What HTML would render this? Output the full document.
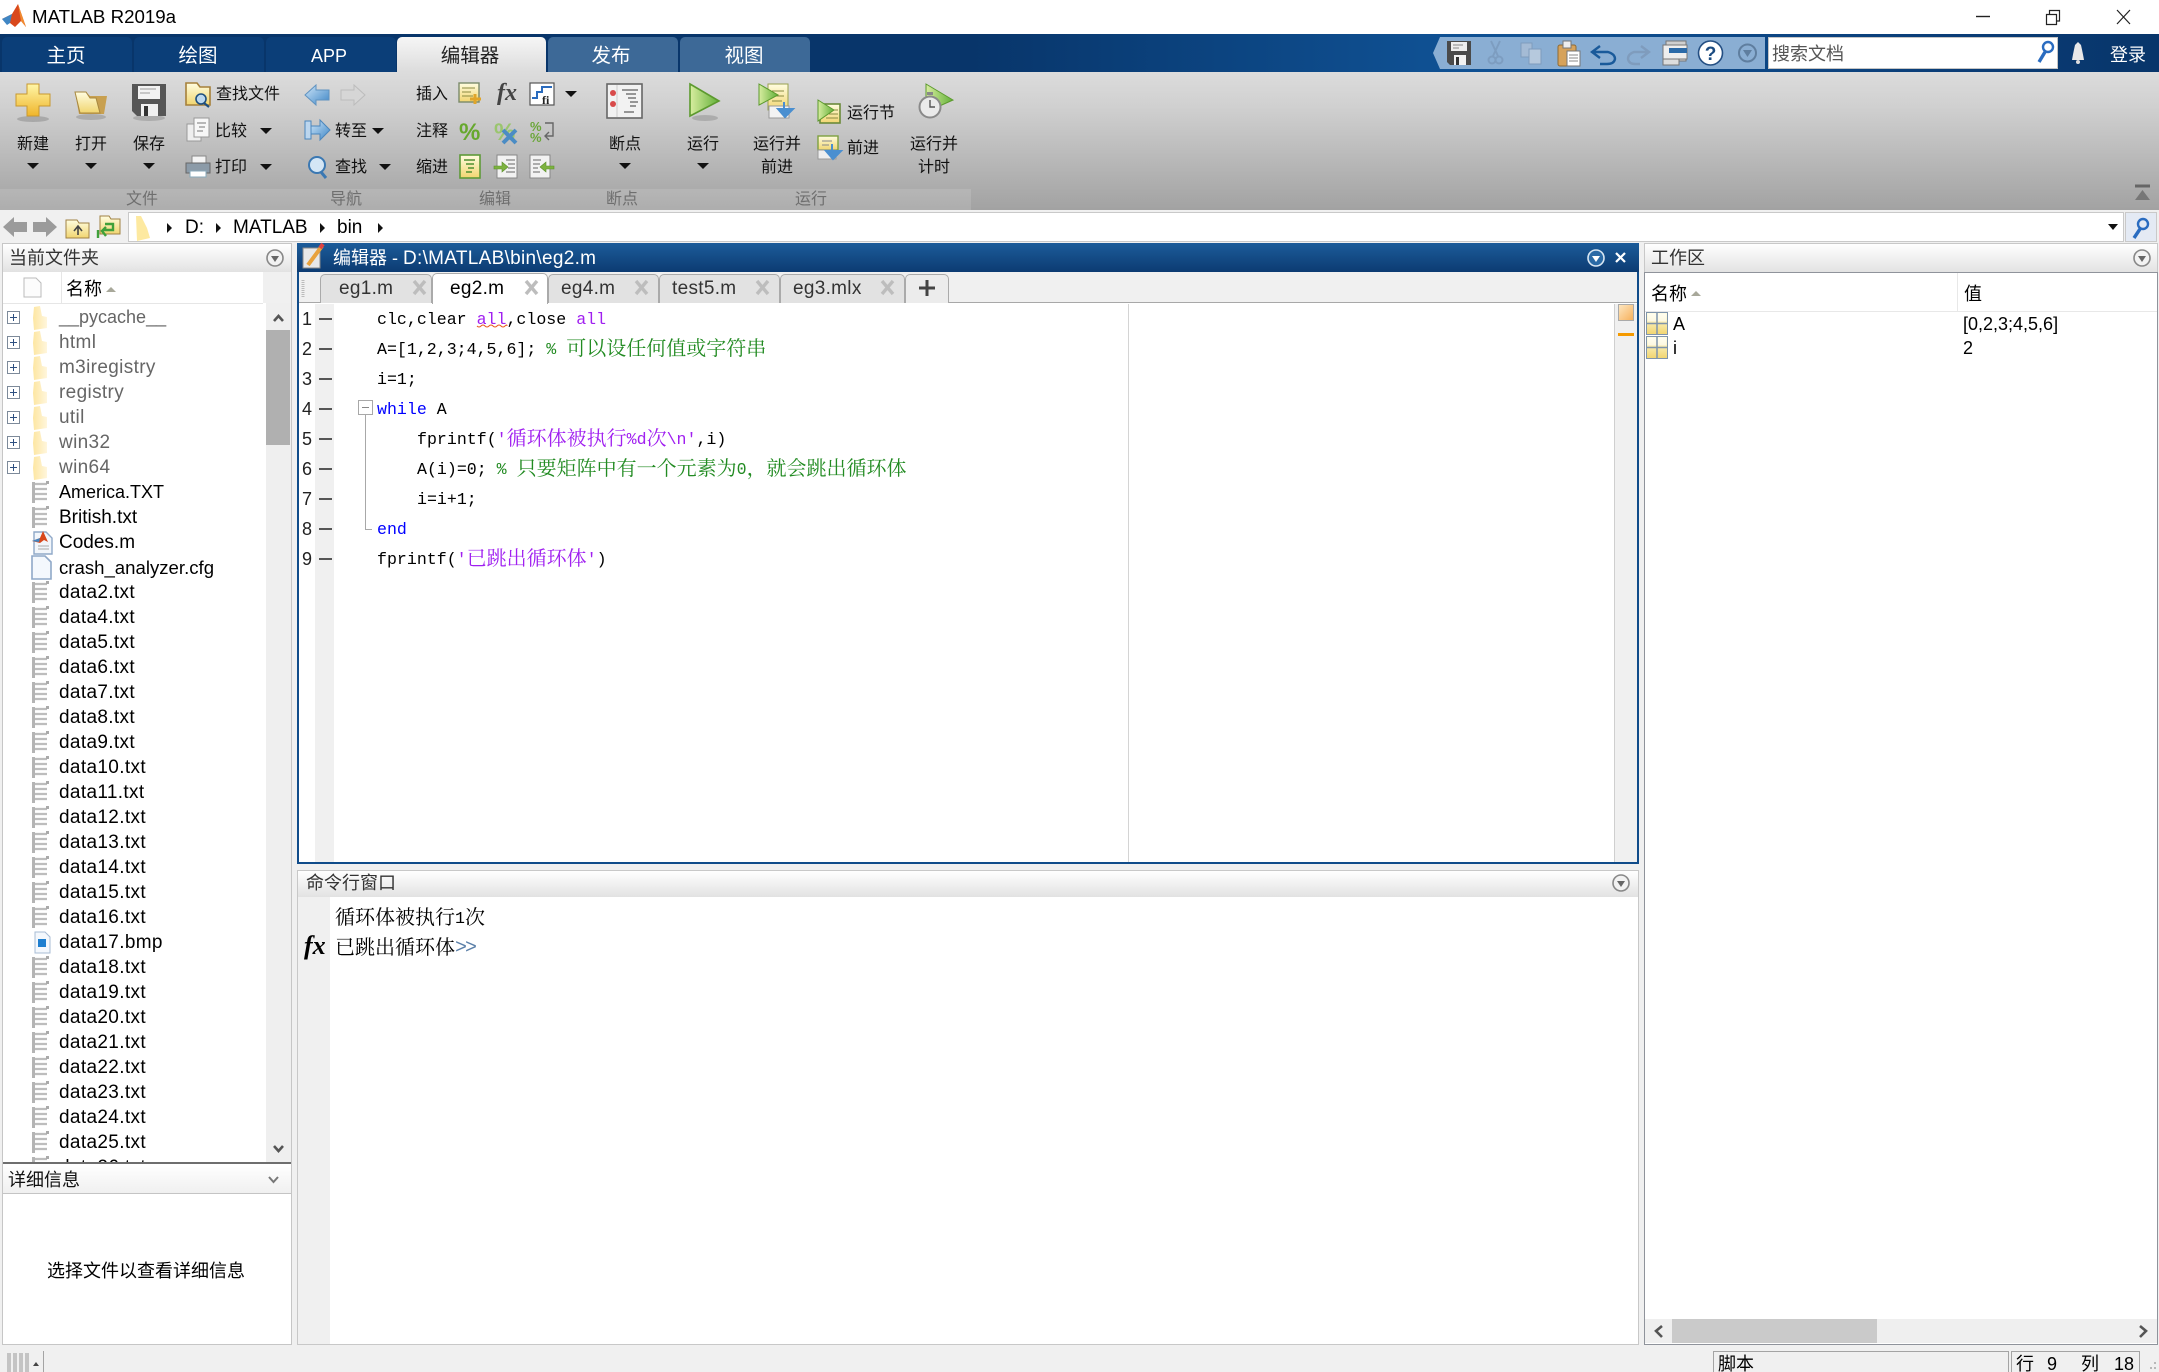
<!DOCTYPE html>
<html><head><meta charset="utf-8"><style>
html,body{margin:0;padding:0;background:#f0f0f0}
#p{position:relative;width:2159px;height:1372px;overflow:hidden;background:#f0f0f0;font:18px/24px "Liberation Sans","Noto Sans CJK SC",sans-serif;color:#000}
.b{position:absolute}
.t{position:absolute;white-space:pre;line-height:24px;height:24px}
.r{font-size:16px;color:#111;margin-top:1px}
.rc{font-size:16px;color:#111;transform:translateX(-50%);margin-top:1px}
.g{font-size:16px;color:#6f6f6f;transform:translateX(-50%);margin-top:1px}
.tab{color:#fff;transform:translateX(-50%);font-size:19.5px}
.m{font-family:"Liberation Mono","Noto Serif CJK SC",monospace;font-size:16.6px;color:#000;margin-top:1px}
.m i{font-style:normal;font-family:"Noto Serif CJK SC",serif;font-size:20px;line-height:0;position:relative;top:1px}
.k{color:#00f}.s{color:#a020f0}.c{color:#228b22}
.hd{background:linear-gradient(#fff,#e2e2e2)}
.row{position:absolute;left:0;height:25px;width:264px;line-height:25px;white-space:pre}
.row span{position:absolute;left:56px;top:0;font-size:19px;letter-spacing:.35px}
.row span.n{font-size:18px;letter-spacing:0}
.row span.o{font-size:19px;letter-spacing:0}
.row svg{position:absolute;left:0;top:0}
.d span{color:#666}
.e{font-size:19px;letter-spacing:.3px}
</style></head><body><div id="p">
<!-- bars -->
<div class="b" style="left:0;top:0;width:2159px;height:34px;background:#fff"></div>
<div class="b" style="left:0;top:34px;width:2159px;height:38px;background:linear-gradient(90deg,#08356a 0,#08356a 45%,#0f5092 66%,#0f5092 72%,#0a3d77 90%,#08356a 100%)"></div>
<div class="b" style="left:0;top:72px;width:2159px;height:138px;background:linear-gradient(#dcdcdc,#d0d0d0 25%,#a2a2a2)"></div>
<div class="b" style="left:0;top:189px;width:971px;height:21px;background:rgba(255,255,255,.13)"></div>
<div class="b" style="left:0;top:210px;width:2159px;height:33px;background:#f0f0f0"></div>
<div class="b" style="left:128px;top:212px;width:1996px;height:30px;background:#fff;border:1px solid #c9c9c9;box-sizing:border-box"></div>
<div class="b" style="left:2125px;top:212px;width:32px;height:30px;background:#e4eaf4;border:1px solid #c9c9c9;box-sizing:border-box"></div>
<!-- tabs -->
<div class="b" style="left:2px;top:37px;width:130px;height:35px;background:#0b3e78;border-radius:5px 5px 0 0"></div>
<div class="b" style="left:134px;top:37px;width:130px;height:35px;background:#0b3e78;border-radius:5px 5px 0 0"></div>
<div class="b" style="left:266px;top:37px;width:130px;height:35px;background:#0b3e78;border-radius:5px 5px 0 0"></div>
<div class="b" style="left:397px;top:37px;width:149px;height:35px;background:linear-gradient(#f6f6f6,#dcdcdc);border-radius:5px 5px 0 0"></div>
<div class="b" style="left:548px;top:37px;width:130px;height:35px;background:#3d6997;border-radius:5px 5px 0 0"></div>
<div class="b" style="left:680px;top:37px;width:130px;height:35px;background:#3d6997;border-radius:5px 5px 0 0"></div>
<!-- quick access bg & search -->
<div class="b" style="left:1433px;top:37px;width:332px;height:32px;background:#8aaed3;clip-path:polygon(7px 0,100% 0,100% 100%,7px 100%,0 50%)"></div>
<div class="b" style="left:1768px;top:37px;width:290px;height:32px;background:#fff;border:1px solid #c5c5c5;box-sizing:border-box"></div>
<!-- left panel -->
<div class="b" style="left:2px;top:243px;width:290px;height:1102px;background:#fff;border:1px solid #c6c6c6;box-sizing:border-box"></div>
<div class="b hd" style="left:3px;top:244px;width:288px;height:28px"></div>
<div class="b" style="left:61px;top:272px;width:1px;height:31px;background:#e6e6e6"></div>
<div class="b" style="left:3px;top:303px;width:260px;height:1px;background:#e6e6e6"></div>
<div class="b" style="left:263px;top:272px;width:28px;height:31px;background:#f0f0f0"></div>
<div class="b" style="left:266px;top:303px;width:25px;height:859px;background:#efefef"></div>
<div class="b" style="left:266px;top:330px;width:24px;height:115px;background:#b0b0b0"></div>
<div class="b" style="left:3px;top:1162px;width:288px;height:2px;background:#6e6e6e"></div>
<div class="b" style="left:3px;top:1164px;width:288px;height:30px;background:linear-gradient(#fff,#f0f0f0);border-bottom:1px solid #c4c4c4;box-sizing:border-box"></div>
<!-- editor -->
<div class="b" style="left:297px;top:243px;width:1342px;height:621px;background:#fff;border:2px solid #104c8a;border-top:0;box-sizing:border-box"></div>
<div class="b" style="left:297px;top:243px;width:1342px;height:29px;background:linear-gradient(#1c5c9a,#0c3b72)"></div>
<div class="b" style="left:299px;top:272px;width:1338px;height:31px;background:#f0f0f0;border-bottom:1px solid #a8a8a8;box-sizing:border-box"></div>
<div class="b" style="left:320px;top:274px;width:112px;height:29px;background:#e2e2e2;border:1px solid #aaa;border-bottom:0;box-sizing:border-box;border-radius:5px 5px 0 0"></div>
<div class="b" style="left:548px;top:274px;width:111px;height:29px;background:#e2e2e2;border:1px solid #aaa;border-bottom:0;box-sizing:border-box;border-radius:5px 5px 0 0"></div>
<div class="b" style="left:659px;top:274px;width:121px;height:29px;background:#e2e2e2;border:1px solid #aaa;border-bottom:0;box-sizing:border-box;border-radius:5px 5px 0 0"></div>
<div class="b" style="left:780px;top:274px;width:125px;height:29px;background:#e2e2e2;border:1px solid #aaa;border-bottom:0;box-sizing:border-box;border-radius:5px 5px 0 0"></div>
<div class="b" style="left:905px;top:274px;width:44px;height:29px;background:#ececec;border:1px solid #aaa;border-bottom:0;box-sizing:border-box;border-radius:5px 5px 0 0"></div>
<div class="b" style="left:432px;top:273px;width:116px;height:31px;background:#fff;border:1px solid #aaa;border-bottom:0;box-sizing:border-box;border-radius:5px 5px 0 0"></div>
<div class="b" style="left:315px;top:304px;width:19px;height:558px;background:#f0f0f0"></div>
<div class="b" style="left:1128px;top:304px;width:1px;height:558px;background:#d4d4d4"></div>
<div class="b" style="left:1614px;top:304px;width:23px;height:558px;background:#f0f0f0;border-left:1px solid #cfcfcf;box-sizing:border-box"></div>
<div class="b" style="left:1618px;top:304px;width:16px;height:17px;background:linear-gradient(135deg,#fde6c0,#f7b15c);border:1px solid #aaa;box-sizing:border-box"></div>
<div class="b" style="left:1618px;top:333px;width:16px;height:3px;background:#f59a00"></div>
<!-- command -->
<div class="b" style="left:297px;top:870px;width:1342px;height:475px;background:#fff;border:1px solid #c8c8c8;box-sizing:border-box"></div>
<div class="b hd" style="left:298px;top:871px;width:1340px;height:26px"></div>
<div class="b" style="left:298px;top:897px;width:32px;height:447px;background:#f0f0f0"></div>
<!-- workspace -->
<div class="b" style="left:1644px;top:243px;width:514px;height:30px;border:1px solid #c8c8c8;border-bottom:0;box-sizing:border-box;background:linear-gradient(#fff,#e2e2e2)"></div>
<div class="b" style="left:1644px;top:272px;width:514px;height:1073px;background:#fff;border:1px solid #8f939b;box-sizing:border-box"></div>
<div class="b" style="left:1645px;top:311px;width:512px;height:1px;background:#e8e8e8"></div>
<div class="b" style="left:1957px;top:273px;width:1px;height:38px;background:#e8e8e8"></div>
<div class="b" style="left:1645px;top:1319px;width:512px;height:24px;background:#efefef"></div>
<div class="b" style="left:1672px;top:1319px;width:205px;height:24px;background:#cacaca"></div>
<!-- status -->
<div class="b" style="left:1713px;top:1351px;width:296px;height:21px;border:1px solid #a4a4a4;border-bottom:0;box-sizing:border-box"></div>
<div class="b" style="left:2011px;top:1351px;width:129px;height:21px;border:1px solid #a4a4a4;border-bottom:0;box-sizing:border-box"></div>
<div class="b" style="left:43px;top:1351px;width:1px;height:21px;background:#a4a4a4"></div>

<svg class="b" style="left:0;top:0" width="2159" height="1372" viewBox="0 0 2159 1372">
<defs>
<linearGradient id="gold" x1="0" y1="0" x2="0" y2="1"><stop offset="0" stop-color="#fff6a8"/><stop offset="1" stop-color="#efb52a"/></linearGradient>
<linearGradient id="fold" x1="0" y1="0" x2="0" y2="1"><stop offset="0" stop-color="#fffde0"/><stop offset="1" stop-color="#f1d570"/></linearGradient>
<linearGradient id="grn" x1="0" y1="0" x2="1" y2="0"><stop offset="0" stop-color="#d8eda0"/><stop offset="1" stop-color="#62b038"/></linearGradient>
<linearGradient id="blu" x1="0" y1="0" x2="1" y2="1"><stop offset="0" stop-color="#cfe6f8"/><stop offset="1" stop-color="#3d86c6"/></linearGradient>
<linearGradient id="pf" x1="0" y1="0" x2="1" y2="0"><stop offset="0" stop-color="#fde6a2"/><stop offset="1" stop-color="#fff6dc"/></linearGradient>
<symbol id="dn" overflow="visible"><path d="M-6 -3H6L0 3Z" fill="#111"/></symbol>
<symbol id="var" overflow="visible"><rect x=".5" y=".5" width="21" height="22" fill="url(#fold)" stroke="#7f94ab"/><rect x="1.5" y="1.5" width="19" height="8" fill="#fff" opacity=".6"/><path d="M11 1V22M1 11.5H21" stroke="#7f94ab" stroke-width="1.5"/></symbol>
<symbol id="circ" overflow="visible"><circle cx="0" cy="0" r="8" fill="#f2f2f2" stroke="#888" stroke-width="1.6"/><path d="M-4 -2H4L0 4Z" fill="#666"/></symbol>
</defs>
<!-- logo -->
<path d="M2 19 L12 14 L18 4 L26 27 L21 21 L15 27 L10 23Z" fill="#d9481c"/><path d="M2 19 L12 14 L10 23 L7 25Z" fill="#3f86c4"/><path d="M18 4 L26 27 L21 21Z" fill="#f08a30"/>
<!-- window controls -->
<path d="M1976 16.5H1990" stroke="#222" stroke-width="1.4"/>
<path d="M2046.5 14.5H2056.5V24.5H2046.5ZM2049.5 14.5V10.5H2059.5V21H2056.5" fill="none" stroke="#222" stroke-width="1.2"/>
<path d="M2117 10L2130 24M2130 10L2117 24" stroke="#222" stroke-width="1.2"/>
<!-- quick access icons -->
<g transform="translate(1447,41)"><path d="M0 0H24V24H3L0 21Z" fill="#4a4a4a"/><rect x="4" y="1" width="16" height="9" fill="#eee"/><path d="M6 4H16M6 7H12" stroke="#888"/><rect x="7" y="14" width="12" height="10" fill="#f2f2f2"/><rect x="9" y="16" width="3" height="8" fill="#333"/></g>
<g transform="translate(1488,41)" fill="none" stroke="#7d9dc0" stroke-width="2" opacity=".95"><path d="M12 0L5 15M3 0L10 15"/><circle cx="4" cy="19" r="3.5"/><circle cx="11" cy="19" r="3.5"/></g>
<g transform="translate(1521,43)" fill="#a4bbd5" stroke="#7f9cbd"><rect x="0" y="0" width="11" height="14"/><rect x="8" y="6" width="12" height="15" fill="#b6c9dd"/></g>
<g transform="translate(1558,41)"><rect x="0" y="4" width="18" height="21" rx="2" fill="#d6a25a" stroke="#8d6a35"/><rect x="5" y="0" width="8" height="7" fill="#eee" stroke="#777"/><rect x="9" y="10" width="13" height="15" fill="#fff" stroke="#777"/><path d="M11 14H20M11 17H20M11 20H20" stroke="#888"/></g>
<path d="M1600 46L1592 52L1600 58M1593 52H1608Q1615 54 1615 59Q1614 64 1607 64H1600" fill="none" stroke="#1a5a9a" stroke-width="2.4"/>
<path d="M1641 46L1649 52L1641 58M1648 52H1634Q1628 54 1628 59Q1629 64 1635 64H1640" fill="none" stroke="#7f9cbd" stroke-width="2.4"/>
<g transform="translate(1663,41)"><rect x="3" y="0" width="20" height="20" fill="#cfcfcf" stroke="#777"/><rect x="0" y="4" width="24" height="14" fill="#eee" stroke="#777"/><rect x="6" y="7" width="18" height="5" fill="#2b6aa8"/><rect x="0" y="18" width="16" height="6" fill="#ddd" stroke="#777"/></g>
<circle cx="1710.5" cy="53" r="12" fill="#fff" stroke="#244f83" stroke-width="1.6"/><text x="1710.5" y="60" font-family="Liberation Sans" font-size="19" font-weight="bold" text-anchor="middle" fill="#1a4a80">?</text>
<circle cx="1747.5" cy="53" r="8.5" fill="none" stroke="#5f7e9f" stroke-width="2"/><path d="M1743 50H1752L1747.5 57Z" fill="#5f7e9f"/>
<!-- search magnifiers -->
<g fill="none" stroke="#2a6cc0"><circle cx="2048" cy="47" r="5" stroke-width="2.4"/><path d="M2045 52L2039 62" stroke-width="3.4"/><circle cx="2143" cy="224" r="5" stroke-width="2.4"/><path d="M2140 229L2134 238" stroke-width="3.4"/></g>
<path d="M2078 42L2081 45Q2083 54 2084 60H2072Q2073 54 2075 45Z" fill="#e8e8e8"/><circle cx="2078" cy="62" r="2" fill="#ddd"/>
<!-- ribbon file group -->
<g><ellipse cx="33" cy="119" rx="16" ry="3" fill="#888" opacity=".5"/><path d="M27 84H39V94H50V106H39V116H27V106H16V94H27Z" fill="url(#gold)" stroke="#c8982f"/></g>
<g><ellipse cx="91" cy="117" rx="15" ry="3" fill="#888" opacity=".45"/><path d="M75 92H86L90 96H107L104 114H79Z" fill="#c8a050"/><path d="M75 92H86L90 98H96L100 113H80Z" fill="url(#fold)" stroke="#a8883f"/></g>
<g><ellipse cx="149" cy="118" rx="16" ry="3" fill="#888" opacity=".45"/><path d="M132 84H166V116H137L132 111Z" fill="#565656"/><rect x="138" y="86" width="22" height="13" fill="#f2f2f2"/><path d="M140 89H156M140 93H150" stroke="#999"/><rect x="141" y="104" width="17" height="12" fill="#f0f0f0"/><rect x="144" y="106" width="4" height="10" fill="#333"/></g>
<use href="#dn" x="33" y="166"/><use href="#dn" x="91" y="166"/><use href="#dn" x="149" y="166"/>
<g><path d="M186 83H197L200 87H210V105H186Z" fill="url(#fold)" stroke="#a6803a" stroke-width="1.6"/><circle cx="201" cy="99" r="5" fill="#bcd8ef" stroke="#1f4f7e" stroke-width="1.6"/><path d="M204 103L209 107" stroke="#1f4f7e" stroke-width="2.2"/></g>
<g fill="#eee" stroke="#999"><rect x="187" y="124" width="14" height="17"/><rect x="194" y="118" width="15" height="19" fill="#f7f7f7"/></g><path d="M197 123H206M199 127H205M197 131H203" stroke="#777"/>
<use href="#dn" x="266" y="131"/>
<g><rect x="192" y="156" width="14" height="7" fill="#f4f4f4" stroke="#888"/><path d="M186 163H210V173H186Z" fill="#8c9ba8" stroke="#666"/><rect x="190" y="171" width="16" height="6" fill="#fff" stroke="#8ab"/></g>
<use href="#dn" x="266" y="167"/>
<!-- nav -->
<path d="M305 95L316 85V90H329V100H316V105Z" fill="url(#blu)" stroke="#5f92c0"/>
<path d="M365 95L354 85V90H341V100H354V105Z" fill="#d6d6d6" stroke="#bcbcbc"/>
<rect x="305" y="121" width="6" height="18" fill="#bcd6ee" stroke="#4a86bd"/><path d="M311 126H320V120L330 130L320 140V134H311Z" fill="url(#blu)" stroke="#4a86bd"/>
<use href="#dn" x="378" y="131"/>
<circle cx="317" cy="165" r="8" fill="#d4e6f5" stroke="#3b78b2" stroke-width="2"/><path d="M321 172L326 178" stroke="#3b78b2" stroke-width="3"/>
<use href="#dn" x="385" y="167"/>
<!-- edit -->
<rect x="459" y="83" width="20" height="19" fill="url(#fold)" stroke="#7a8a6a" stroke-width="1.4"/><path d="M462 88H475M462 92H471M462 96H473" stroke="#8a8a40"/><path d="M475 94V104M470 99H481" stroke="#e0a52a" stroke-width="3"/>
<text x="497" y="100" font-family="Liberation Serif" font-style="italic" font-weight="bold" font-size="24" fill="#444">fx</text>
<rect x="530" y="83" width="24" height="22" fill="#fff" stroke="#555" stroke-width="1.2"/><path d="M532 98H537V92H542V87H552" stroke="#2a6bbd" stroke-width="2" fill="none"/><text x="542" y="104" font-family="Liberation Serif" font-size="12" font-weight="bold" fill="#222">fi</text>
<use href="#dn" x="571" y="94"/>
<text x="459" y="140" font-family="Liberation Sans" font-size="24" font-weight="bold" fill="#67a82e">%</text>
<text x="494" y="140" font-family="Liberation Sans" font-size="24" font-weight="bold" fill="#9ac56e">%</text><path d="M503 130L516 143M516 130L503 143" stroke="#4b8cc4" stroke-width="4"/>
<text x="530" y="131" font-family="Liberation Sans" font-size="13" font-weight="bold" fill="#6ba63a">%</text><text x="530" y="142" font-family="Liberation Sans" font-size="13" font-weight="bold" fill="#6ba63a">%</text><path d="M545 123H553V136H546M549 132L545 136L549 140" fill="none" stroke="#666" stroke-width="1.4"/>
<rect x="460" y="155" width="20" height="23" fill="url(#fold)" stroke="#5e9a38" stroke-width="1.6"/><path d="M464 160H475M466 164H474M468 168H474M466 172H472" stroke="#4f9030" stroke-width="1.4"/>
<rect x="497" y="155" width="20" height="23" fill="#f2f2f2" stroke="#888"/><path d="M506 160H515M508 164H515M508 168H515M506 172H515" stroke="#666"/><path d="M494 166H502V162L508 167L502 172V169H494Z" fill="#7db23f" stroke="#5b8f2b" stroke-width=".6"/>
<rect x="530" y="155" width="20" height="23" fill="#f2f2f2" stroke="#888"/><path d="M533 160H541M533 164H540M533 168H538M533 172H540" stroke="#666"/><path d="M554 166H546V162L540 167L546 172V169H554Z" fill="#7db23f" stroke="#5b8f2b" stroke-width=".6"/>
<!-- breakpoint -->
<rect x="607" y="84" width="35" height="34" fill="#f2f2f2" stroke="#666" stroke-width="1.6"/><path d="M617 85V117" stroke="#ccc"/><circle cx="613" cy="93" r="3" fill="#d84a4a"/><circle cx="613" cy="104" r="3" fill="#d84a4a"/><path d="M622 90H638M626 94H636M628 98H636M630 102H638M630 106H636M624 112H634" stroke="#777" stroke-width="1.4"/>
<use href="#dn" x="625" y="166"/>
<!-- run -->
<ellipse cx="705" cy="118" rx="13" ry="3" fill="#888" opacity=".45"/><path d="M690 84L719 101L690 116Z" fill="url(#grn)" stroke="#5c9a2e" stroke-width="1.6"/>
<use href="#dn" x="703" y="166"/>
<rect x="768" y="84" width="20" height="26" fill="url(#fold)" stroke="#9aa14f"/><path d="M772 91H784M776 96H784M772 101H782" stroke="#8a8a40"/><rect x="769" y="106" width="20" height="12" fill="#f3f3f3" stroke="#999"/><path d="M759 84L778 95L759 105Z" fill="url(#grn)" stroke="#5c9a2e"/><path d="M784 102V112M778 109L785 117L793 109Z" fill="#4a8fd0" stroke="#4a8fd0" stroke-width="2"/>
<rect x="820" y="104" width="20" height="19" fill="url(#fold)" stroke="#6b8a3a" stroke-width="1.6"/><path d="M826 110H838M829 114H838M826 118H838" stroke="#8a8a40"/><path d="M818 100L834 110L818 121Z" fill="url(#grn)" stroke="#5c9a2e"/>
<rect x="818" y="136" width="20" height="14" fill="url(#fold)" stroke="#7ea03f" stroke-width="1.4"/><rect x="818" y="150" width="18" height="9" fill="#eee" stroke="#999"/><path d="M822 141H832M822 145H829" stroke="#888"/><path d="M832 144V152M826 151L833 159L841 151Z" fill="#4a8fd0" stroke="#4a8fd0" stroke-width="2"/>
<path d="M926 84L953 100L926 112Z" fill="url(#grn)" stroke="#5c9a2e"/><circle cx="930" cy="107" r="10.5" fill="#eaeaea" stroke="#8a8a8a" stroke-width="2"/><path d="M930 100V107H935" stroke="#555" fill="none" stroke-width="1.4"/><rect x="927" y="92" width="6" height="3" fill="#888"/>
<!-- collapse -->
<path d="M2135 186H2150" stroke="#666" stroke-width="3"/><path d="M2142.5 190L2150 200H2135Z" fill="#777"/>
<!-- path bar -->
<path d="M3 227L14 217V222H27V232H14V237Z" fill="#9b9b9b"/><path d="M57 227L46 217V222H33V232H46V237Z" fill="#9b9b9b"/>
<path d="M66 220H77L79 223H89V238H66Z" fill="url(#fold)" stroke="#a08244"/><path d="M78 235V227M74 231L78 226L82 231" fill="none" stroke="#444" stroke-width="1.6"/>
<path d="M100 216H109L111 219H120V234H100Z" fill="url(#fold)" stroke="#a08244"/><path d="M105 224H113V230H103M106 227L102 231L106 236M98 230V238" fill="none" stroke="#3fa03a" stroke-width="2.4"/>
<path d="M136 216H141L147 228L150 238L137 241Z" fill="#fde9a0"/>
<g fill="#111"><path d="M167 223L172 228L167 233Z"/><path d="M216 223L221 228L216 233Z"/><path d="M320 223L325 228L320 233Z"/><path d="M378 223L383 228L378 233Z"/></g>
<path d="M2108 224H2118L2113 230Z" fill="#111"/>
<!-- panel headers circ -->
<use href="#circ" x="275" y="258"/>
<g transform="translate(1596,258)"><circle r="8" fill="#2a6aa6" stroke="#d8e6f2" stroke-width="1.6"/><path d="M-4 -2H4L0 4Z" fill="#fff"/></g>
<path d="M1616 253L1625 262M1625 253L1616 262" stroke="#fff" stroke-width="2.2"/>
<use href="#circ" x="1621" y="883"/><use href="#circ" x="2142" y="258"/>
<!-- left hdr -->
<path d="M24 278H36L41 283V297H24Z" fill="#fcfcfc" stroke="#bbb"/>
<path d="M106 292L111 287L116 292Z" fill="#a8a89a"/><path d="M1691 296L1696 291L1701 296Z" fill="#a8a89a"/>
<!-- scroll chevrons -->
<path d="M274 321L278.500 316L283 321" fill="none" stroke="#555" stroke-width="2.6"/>
<path d="M274 1146L278.500 1151L283 1146" fill="none" stroke="#555" stroke-width="2.6"/>
<path d="M269 1177L273.500 1182L278 1177" fill="none" stroke="#777" stroke-width="2"/>
<path d="M1662 1326L1656 1331L1662 1337" fill="none" stroke="#555" stroke-width="2.6"/>
<path d="M2140 1326L2146 1331L2140 1337" fill="none" stroke="#555" stroke-width="2.6"/>
<!-- editor title icon -->
<rect x="303" y="248" width="17" height="20" fill="#e8e8e8" stroke="#888"/><path d="M308 265L322 246" stroke="#e9a23c" stroke-width="4"/><path d="M320 248L323 244" stroke="#d44" stroke-width="4"/>
<!-- tab grip & close -->
<path d="M303 280V298" stroke="#bbb" stroke-width="3" stroke-dasharray="1 1"/>
<g stroke="#bdbdbd" stroke-width="3.4"><path d="M414 281L425 294M425 281L414 294"/><path d="M526 281L537 294M537 281L526 294"/><path d="M636 281L647 294M647 281L636 294"/><path d="M757 281L768 294M768 281L757 294"/><path d="M882 281L893 294M893 281L882 294"/></g>
<path d="M919 288H935M927 280V296" stroke="#444" stroke-width="3"/>
<!-- line dashes -->
<path d="M319 319H332M319 349H332M319 379H332M319 409H332M319 439H332M319 469H332M319 499H332M319 529H332M319 559H332" stroke="#222" stroke-width="1.5"/>
<!-- fold -->
<rect x="358.500" y="400.500" width="14" height="14" fill="#fff" stroke="#a8a8a8"/><path d="M362 407.500H369" stroke="#888"/>
<path d="M365.500 415V529.500H372" fill="none" stroke="#a8a8a8"/>
<path d="M477 326q2 2 4 0t4 0t4 0t4 0t4 0t4 0t4 0t2 0" fill="none" stroke="#e85a20" stroke-width="1"/>
<!-- var icons -->
<use href="#var" x="1646" y="312"/><use href="#var" x="1646" y="336"/>
<!-- status grip -->
<g fill="#c4c4c4"><rect x="7" y="1353" width="4" height="19"/><rect x="13" y="1353" width="4" height="19"/><rect x="19" y="1353" width="4" height="19"/><rect x="25" y="1353" width="4" height="19"/></g>
<path d="M33 1366L36 1362L39 1366Z" fill="#444"/>
<g fill="#b8b8b8"><rect x="2154" y="1362" width="2" height="2"/><rect x="2150" y="1367" width="2" height="2"/><rect x="2154" y="1367" width="2" height="2"/></g>
</svg>

<!-- title & tabs text -->
<div class="t" style="left:32px;top:5px;font-size:18.7px">MATLAB R2019a</div>
<div class="t tab" style="left:66px;top:44px">主页</div>
<div class="t tab" style="left:198px;top:44px">绘图</div>
<div class="t tab" style="left:329px;top:44px;font-size:18px">APP</div>
<div class="t tab" style="left:470px;top:44px;color:#222">编辑器</div>
<div class="t tab" style="left:611px;top:44px">发布</div>
<div class="t tab" style="left:744px;top:44px">视图</div>
<div class="t" style="left:1772px;top:42px;color:#555">搜索文档</div>
<div class="t" style="left:2110px;top:43px;color:#fff">登录</div>
<!-- ribbon text -->
<div class="t rc" style="left:33px;top:132px">新建</div>
<div class="t rc" style="left:91px;top:132px">打开</div>
<div class="t rc" style="left:149px;top:132px">保存</div>
<div class="t r" style="left:216px;top:82px">查找文件</div>
<div class="t r" style="left:215px;top:119px">比较</div>
<div class="t r" style="left:215px;top:155px">打印</div>
<div class="t r" style="left:335px;top:119px">转至</div>
<div class="t r" style="left:335px;top:155px">查找</div>
<div class="t r" style="left:416px;top:82px">插入</div>
<div class="t r" style="left:416px;top:119px">注释</div>
<div class="t r" style="left:416px;top:155px">缩进</div>
<div class="t rc" style="left:625px;top:132px">断点</div>
<div class="t rc" style="left:703px;top:132px">运行</div>
<div class="t rc" style="left:777px;top:132px">运行并</div>
<div class="t rc" style="left:777px;top:155px">前进</div>
<div class="t r" style="left:847px;top:101px">运行节</div>
<div class="t r" style="left:847px;top:136px">前进</div>
<div class="t rc" style="left:934px;top:132px">运行并</div>
<div class="t rc" style="left:934px;top:155px">计时</div>
<div class="t g" style="left:142px;top:187px">文件</div>
<div class="t g" style="left:346px;top:187px">导航</div>
<div class="t g" style="left:495px;top:187px">编辑</div>
<div class="t g" style="left:622px;top:187px">断点</div>
<div class="t g" style="left:811px;top:187px">运行</div>
<!-- path -->
<div class="t" style="left:185px;top:216px;font-size:19px">D:</div>
<div class="t" style="left:233px;top:216px;font-size:19px">MATLAB</div>
<div class="t" style="left:337px;top:216px;font-size:19px">bin</div>
<!-- left panel text -->
<div class="t" style="left:9px;top:246px;color:#333">当前文件夹</div>
<div class="t" style="left:66px;top:277px">名称</div>
<div class="b" style="left:3px;top:304px;width:263px;height:858px;overflow:hidden">
<svg width="0" height="0" style="position:absolute"><defs>
<symbol id="pl" viewBox="0 0 263 25"><rect x="4.500" y="6.500" width="12" height="12" fill="#fff" stroke="#7d8a9a"/><path d="M7 12.500H14M10.500 9V16" stroke="#2d4f80"/><path d="M30 13L31 2L37 1L39 11L44 12V23L31 25Z" fill="url(#pf)"/></symbol>
<symbol id="tx" viewBox="0 0 263 25"><path d="M30 4H44M30 9H44M30 14H44M30 19H44" stroke="#bdbdbd" stroke-width="2.200"/><rect x="29" y="2" width="3" height="21" fill="#b4b4b4"/><rect x="43" y="1" width="3" height="3" fill="#aaa"/></symbol>
</defs></svg>
<div class="row d" style="top:1px"><svg width="263" height="25"><use href="#pl"/></svg><span class="n">__pycache__</span></div>
<div class="row d" style="top:26px"><svg width="263" height="25"><use href="#pl"/></svg><span>html</span></div>
<div class="row d" style="top:51px"><svg width="263" height="25"><use href="#pl"/></svg><span>m3iregistry</span></div>
<div class="row d" style="top:76px"><svg width="263" height="25"><use href="#pl"/></svg><span>registry</span></div>
<div class="row d" style="top:101px"><svg width="263" height="25"><use href="#pl"/></svg><span>util</span></div>
<div class="row d" style="top:126px"><svg width="263" height="25"><use href="#pl"/></svg><span>win32</span></div>
<div class="row d" style="top:151px"><svg width="263" height="25"><use href="#pl"/></svg><span>win64</span></div>
<div class="row" style="top:176px"><svg width="263" height="25"><use href="#tx"/></svg><span class="n">America.TXT</span></div>
<div class="row" style="top:201px"><svg width="263" height="25"><use href="#tx"/></svg><span class="o">British.txt</span></div>
<div class="row" style="top:226px"><svg width="263" height="25"><path d="M31 2H43L49 8V24H31Z" fill="#f2f6fb" stroke="#8fa8c8" stroke-width="1.400"/><path d="M29 11L37 8L40 1L45 12L41 10L37 13Z" fill="#d8481c"/><path d="M29 11L37 8L36 12Z" fill="#3f86c4"/><path d="M35 16H46M35 19H46" stroke="#aaa"/></svg><span class="o">Codes.m</span></div>
<div class="row" style="top:251px"><svg width="263" height="25"><path d="M29 1H42L48 7V24H29Z" fill="#f4f8fd" stroke="#8fa8c8" stroke-width="1.600"/></svg><span class="o" style="font-size:18.6px">crash_analyzer.cfg</span></div>
<div class="row" style="top:276px"><svg width="263" height="25"><use href="#tx"/></svg><span>data2.txt</span></div>
<div class="row" style="top:301px"><svg width="263" height="25"><use href="#tx"/></svg><span>data4.txt</span></div>
<div class="row" style="top:326px"><svg width="263" height="25"><use href="#tx"/></svg><span>data5.txt</span></div>
<div class="row" style="top:351px"><svg width="263" height="25"><use href="#tx"/></svg><span>data6.txt</span></div>
<div class="row" style="top:376px"><svg width="263" height="25"><use href="#tx"/></svg><span>data7.txt</span></div>
<div class="row" style="top:401px"><svg width="263" height="25"><use href="#tx"/></svg><span>data8.txt</span></div>
<div class="row" style="top:426px"><svg width="263" height="25"><use href="#tx"/></svg><span>data9.txt</span></div>
<div class="row" style="top:451px"><svg width="263" height="25"><use href="#tx"/></svg><span>data10.txt</span></div>
<div class="row" style="top:476px"><svg width="263" height="25"><use href="#tx"/></svg><span>data11.txt</span></div>
<div class="row" style="top:501px"><svg width="263" height="25"><use href="#tx"/></svg><span>data12.txt</span></div>
<div class="row" style="top:526px"><svg width="263" height="25"><use href="#tx"/></svg><span>data13.txt</span></div>
<div class="row" style="top:551px"><svg width="263" height="25"><use href="#tx"/></svg><span>data14.txt</span></div>
<div class="row" style="top:576px"><svg width="263" height="25"><use href="#tx"/></svg><span>data15.txt</span></div>
<div class="row" style="top:601px"><svg width="263" height="25"><use href="#tx"/></svg><span>data16.txt</span></div>
<div class="row" style="top:626px"><svg width="263" height="25"><path d="M32 2H42L47 7V23H32Z" fill="#f4f8fd" stroke="#a8bcd4"/><rect x="35" y="9" width="8" height="8" fill="#1f7fd0"/></svg><span>data17.bmp</span></div>
<div class="row" style="top:651px"><svg width="263" height="25"><use href="#tx"/></svg><span>data18.txt</span></div>
<div class="row" style="top:676px"><svg width="263" height="25"><use href="#tx"/></svg><span>data19.txt</span></div>
<div class="row" style="top:701px"><svg width="263" height="25"><use href="#tx"/></svg><span>data20.txt</span></div>
<div class="row" style="top:726px"><svg width="263" height="25"><use href="#tx"/></svg><span>data21.txt</span></div>
<div class="row" style="top:751px"><svg width="263" height="25"><use href="#tx"/></svg><span>data22.txt</span></div>
<div class="row" style="top:776px"><svg width="263" height="25"><use href="#tx"/></svg><span>data23.txt</span></div>
<div class="row" style="top:801px"><svg width="263" height="25"><use href="#tx"/></svg><span>data24.txt</span></div>
<div class="row" style="top:826px"><svg width="263" height="25"><use href="#tx"/></svg><span>data25.txt</span></div>
<div class="row" style="top:851px"><svg width="263" height="25"><use href="#tx"/></svg><span>data26.txt</span></div>
</div>
<div class="t" style="left:8px;top:1168px;color:#111">详细信息</div>
<div class="t" style="left:47px;top:1259px">选择文件以查看详细信息</div>
<!-- editor text -->
<div class="t" style="left:333px;top:246px;color:#fff">编辑器 - <span class="e">D:\MATLAB\bin\eg2.m</span></div>
<div class="t e" style="left:339px;top:277px;color:#333">eg1.m</div>
<div class="t e" style="left:450px;top:277px">eg2.m</div>
<div class="t e" style="left:561px;top:277px;color:#333">eg4.m</div>
<div class="t e" style="left:672px;top:277px;color:#333">test5.m</div>
<div class="t e" style="left:793px;top:277px;color:#333">eg3.mlx</div>
<div class="t" style="left:302px;top:307px;color:#222">1</div>
<div class="t" style="left:302px;top:337px;color:#222">2</div>
<div class="t" style="left:302px;top:367px;color:#222">3</div>
<div class="t" style="left:302px;top:397px;color:#222">4</div>
<div class="t" style="left:302px;top:427px;color:#222">5</div>
<div class="t" style="left:302px;top:457px;color:#222">6</div>
<div class="t" style="left:302px;top:487px;color:#222">7</div>
<div class="t" style="left:302px;top:517px;color:#222">8</div>
<div class="t" style="left:302px;top:547px;color:#222">9</div>
<div class="t m" style="left:377px;top:307px">clc,clear <span class="s">all</span>,close <span class="s">all</span></div>
<div class="t m" style="left:377px;top:337px">A=[1,2,3;4,5,6]; <span class="c">% <i>可以设任何值或字符串</i></span></div>
<div class="t m" style="left:377px;top:367px">i=1;</div>
<div class="t m" style="left:377px;top:397px"><span class="k">while</span> A</div>
<div class="t m" style="left:417px;top:427px">fprintf(<span class="s">'<i>循环体被执行</i>%d<i>次</i>\n'</span>,i)</div>
<div class="t m" style="left:417px;top:457px">A(i)=0; <span class="c">% <i>只要矩阵中有一个元素为</i>0<i>，就会跳出循环体</i></span></div>
<div class="t m" style="left:417px;top:487px">i=i+1;</div>
<div class="t m k" style="left:377px;top:517px">end</div>
<div class="t m" style="left:377px;top:547px">fprintf(<span class="s">'<i>已跳出循环体</i>'</span>)</div>
<!-- command -->
<div class="t" style="left:306px;top:871px;color:#333">命令行窗口</div>
<div class="t m" style="left:335px;top:906px"><i>循环体被执行</i>1<i>次</i></div>
<div class="t m" style="left:335px;top:936px"><i>已跳出循环体</i><span style="color:#5a7fa8;font-size:20px;letter-spacing:-2px">&gt;&gt;</span></div>
<div class="t" style="left:304px;top:934px;font:italic bold 26px/24px 'Liberation Serif',serif">fx</div>
<!-- workspace -->
<div class="t" style="left:1651px;top:246px;color:#333">工作区</div>
<div class="t" style="left:1651px;top:282px">名称</div>
<div class="t" style="left:1964px;top:282px">值</div>
<div class="t" style="left:1673px;top:312px">A</div>
<div class="t" style="left:1673px;top:336px">i</div>
<div class="t" style="left:1963px;top:312px">[0,2,3;4,5,6]</div>
<div class="t" style="left:1963px;top:336px">2</div>
<!-- status -->
<div class="t" style="left:1718px;top:1352px">脚本</div>
<div class="t" style="left:2016px;top:1352px">行</div>
<div class="t" style="left:2047px;top:1352px">9</div>
<div class="t" style="left:2081px;top:1352px">列</div>
<div class="t" style="left:2114px;top:1352px">18</div>
</div></body></html>
